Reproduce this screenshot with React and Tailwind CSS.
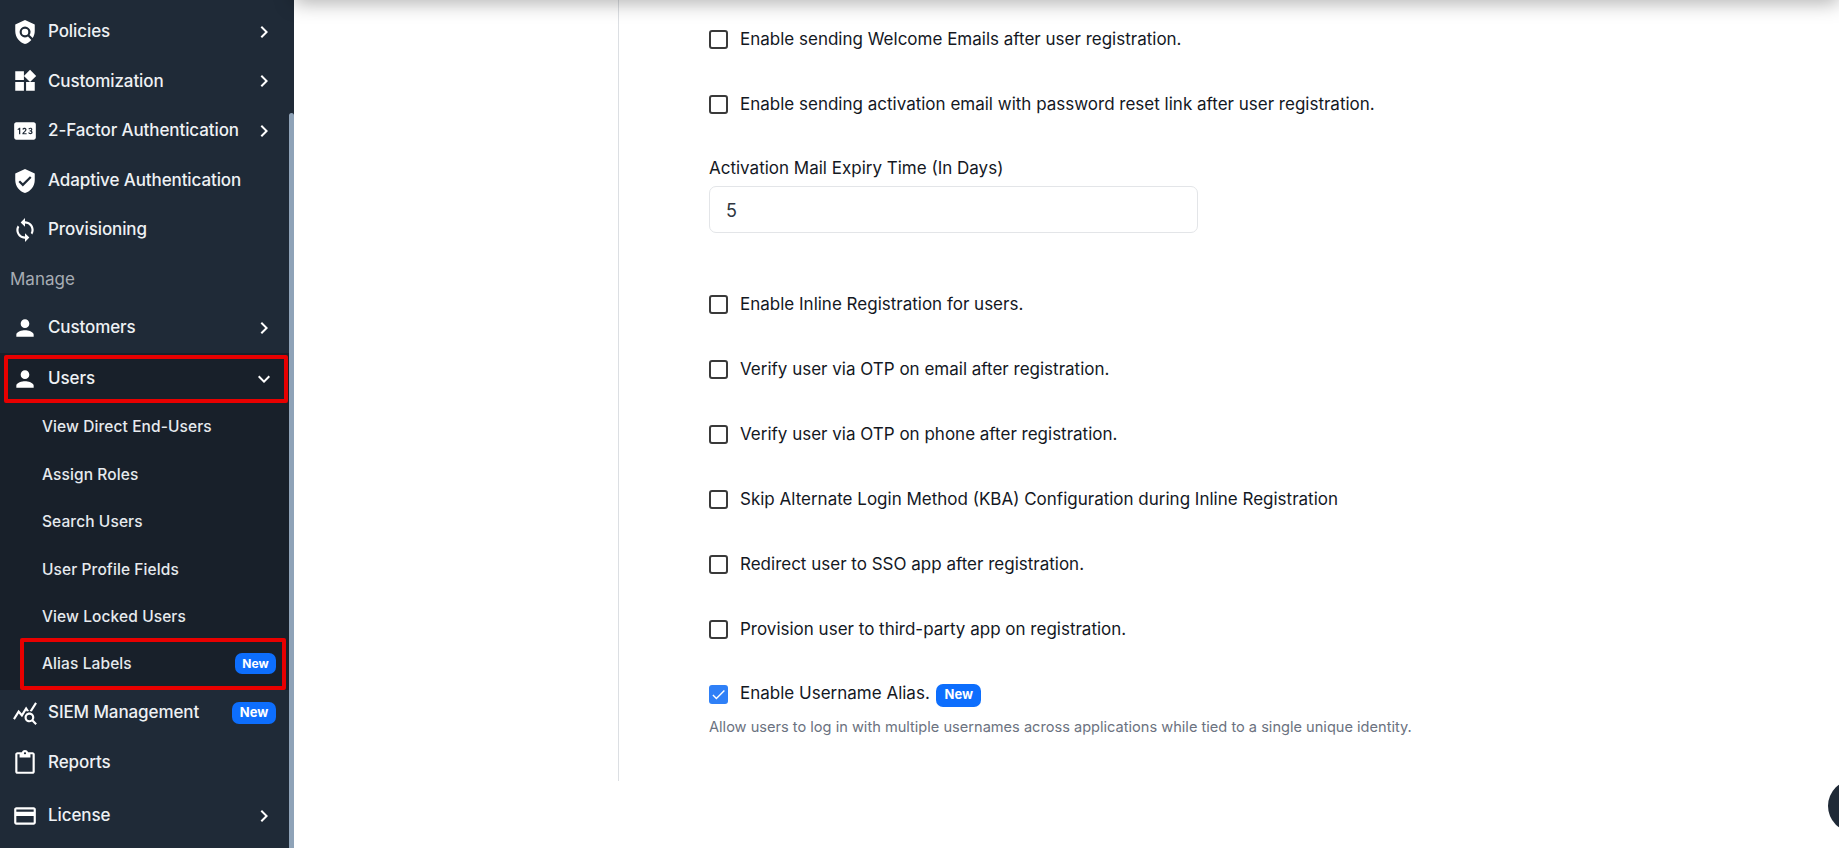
import React from "react";
import { MdPolicy, MdWidgets, MdPin, MdVerifiedUser, MdSync, MdPerson, MdQueryStats, MdOutlineContentPaste, MdCreditCard, MdKeyboardArrowRight, MdKeyboardArrowDown, MdCheck } from "react-icons/md";

const font = { fontFamily: "Inter, 'Noto Sans', sans-serif" };

function NewBadge({ className }) {
  return <span className={`flex items-center justify-center rounded-[7px] bg-[#0d6efd] font-bold text-white ${className}`}>New</span>;
}

function NavItem({ icon: Icon, label, arrow, badge, height = "h-[49.6px]" }) {
  return (
    <div className={`flex items-center pl-[12px] pr-[13px] ${height}`}>
      <Icon className="h-[26px] w-[26px] shrink-0 text-white" />
      <span className="ml-[10px] flex-1 whitespace-nowrap text-[17px] font-medium tracking-[-0.1px] text-[#eef1f4]">{label}</span>
      {arrow && <MdKeyboardArrowRight className="h-[24px] w-[24px] text-white" />}
      {badge && <NewBadge className="h-[22px] w-[44px] text-[13px]" />}
    </div>
  );
}

function SubItem({ label }) {
  return <div className="flex h-[47.5px] items-center pl-[42px] text-[15.5px] font-medium tracking-[0.1px] text-[#e6eaee]">{label}</div>;
}

function CheckRow({ label }) {
  return (
    <div className="flex h-[65px] items-center">
      <span className="h-[19px] w-[19px] rounded-[3px] border-2 border-[#3a3a3a] bg-white" />
      <span className="ml-[12px] whitespace-nowrap text-[17px] text-[#14181f]">{label}</span>
    </div>
  );
}

export default function App() {
  return (
    <div className="relative flex h-[848px] overflow-hidden bg-white" style={font}>
      {/* Sidebar */}
      <aside className="relative w-[294px] shrink-0 overflow-hidden bg-[#1f2a37] pr-[5px]">
        <div className="pb-[1.6px] pt-[7px]">
          <NavItem icon={MdPolicy} label="Policies" arrow />
          <NavItem icon={MdWidgets} label="Customization" arrow />
          <NavItem icon={MdPin} label="2-Factor Authentication" arrow />
          <NavItem icon={MdVerifiedUser} label="Adaptive Authentication" />
          <NavItem icon={MdSync} label="Provisioning" />
          <div className="flex h-[49.6px] items-center pl-[10px] text-[17px] text-[#a7adb4]">Manage</div>
          <NavItem icon={MdPerson} label="Customers" arrow height="h-[47px]" />
        </div>

        {/* Users section */}
        <div className="bg-[#18202a] pt-[2px]">
          <div className="ml-[4px] mr-[1px] flex h-[48px] items-center rounded-[2px] border-[4px] border-[#e80000] pl-[4px] pr-[8px]">
            <MdPerson className="h-[26px] w-[26px] shrink-0 text-white" />
            <span className="ml-[10px] flex-1 text-[17px] font-medium tracking-[-0.1px] text-[#eef1f4]">Users</span>
            <MdKeyboardArrowDown className="h-[24px] w-[24px] text-white" />
          </div>
          <SubItem label="View Direct End-Users" />
          <SubItem label="Assign Roles" />
          <SubItem label="Search Users" />
          <SubItem label="User Profile Fields" />
          <SubItem label="View Locked Users" />
          <div className="ml-[20px] mr-[3px] mt-[-3px] flex h-[52px] items-center rounded-[2px] border-[4px] border-[#e80000] pl-[18px] pr-[6px] text-[15.5px] font-medium tracking-[0.1px] text-[#e6eaee]">
            <span className="flex-1">Alias Labels</span>
            <NewBadge className="h-[21px] w-[41px] text-[12px]" />
          </div>
        </div>

        <NavItem icon={MdQueryStats} label="SIEM Management" badge height="h-[47px]" />
        <NavItem icon={MdOutlineContentPaste} label="Reports" height="h-[53px]" />
        <NavItem icon={MdCreditCard} label="License" arrow height="h-[52px]" />

        {/* Scrollbar */}
        <div className="absolute bottom-0 right-0 top-[113px] w-[5px] rounded-t-[3px] bg-[#8fa3b8]" />
      </aside>

      {/* Main */}
      <main className="relative flex-1">
        <div className="ml-[324px] h-[781px] border-l border-[#dcdfe3] pl-[90px] pt-[7px]">
          <CheckRow label="Enable sending Welcome Emails after user registration." />
          <CheckRow label="Enable sending activation email with password reset link after user registration." />

          <div className="flex h-[49px] items-start pt-[20px] text-[17px] leading-[22px] text-[#14181f]">
            Activation Mail Expiry Time (In Days)
          </div>
          <div className="flex h-[47px] w-[489px] items-center rounded-[7px] border border-[#e3e5e8] pl-[16px] pt-[1px] text-[18px] text-[#2f3640]">5</div>

          <div className="mt-[39px]">
            <CheckRow label="Enable Inline Registration for users." />
            <CheckRow label="Verify user via OTP on email after registration." />
            <CheckRow label="Verify user via OTP on phone after registration." />
            <CheckRow label="Skip Alternate Login Method (KBA) Configuration during Inline Registration" />
            <CheckRow label="Redirect user to SSO app after registration." />
            <CheckRow label="Provision user to third-party app on registration." />
          </div>

          <div className="mt-[8px] flex h-[48px] items-center">
            <span className="flex h-[19px] w-[19px] items-center justify-center rounded-[3px] bg-[#2f80f7]">
              <MdCheck className="h-[17px] w-[17px] text-white" />
            </span>
            <span className="ml-[12px] whitespace-nowrap text-[17px] text-[#14181f]">Enable Username Alias.</span>
            <NewBadge className="ml-[6.5px] mt-[2px] h-[23px] w-[45px] text-[13px]" />
          </div>
          <p className="mt-[1px] flex h-[18px] items-center whitespace-nowrap text-[14.6px] text-[#6b7280]">
            Allow users to log in with multiple usernames across applications while tied to a single unique identity.
          </p>
        </div>

        {/* Header shadow */}
        <div className="absolute inset-x-0 top-[-20px] h-[20px] shadow-[0_2px_20px_rgba(0,0,0,0.35)]" />
      </main>

      {/* Chat widget */}
      <div className="absolute left-[1828px] top-[780px] h-[52px] w-[52px] rounded-full bg-[#1f2a37]" />
    </div>
  );
}
